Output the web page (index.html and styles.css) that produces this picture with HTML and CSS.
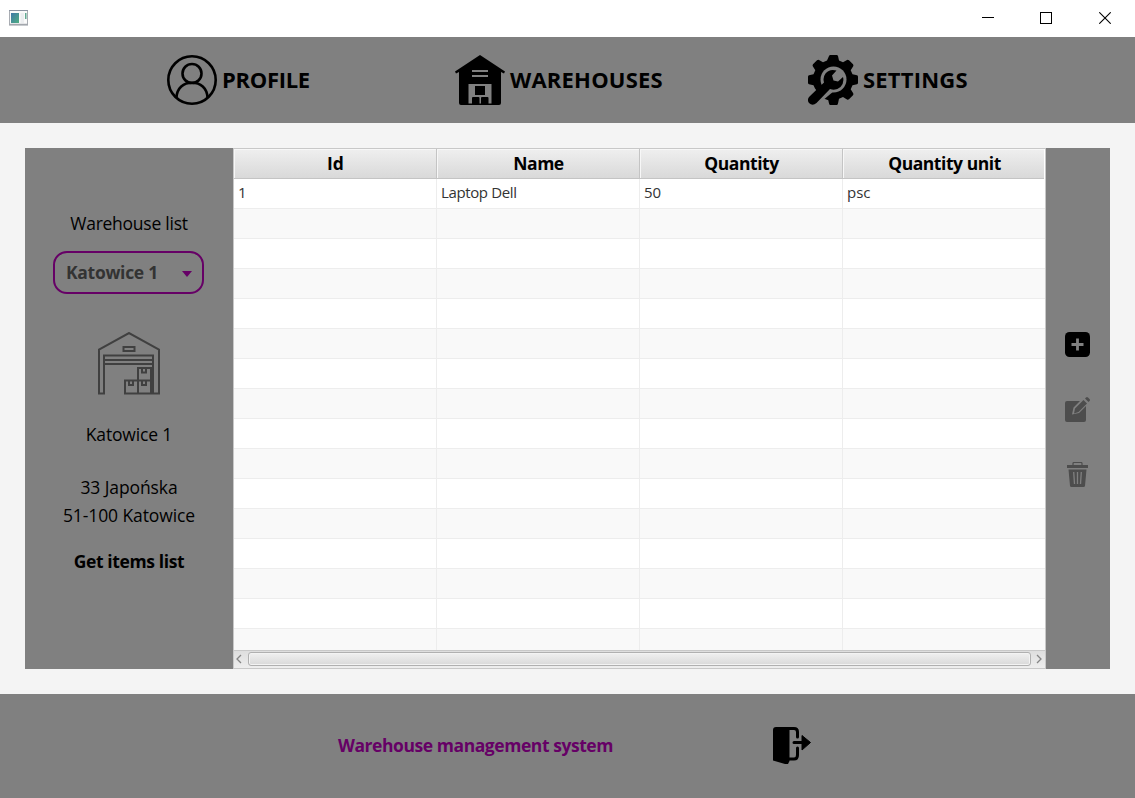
FILE: index.html
```html
<!DOCTYPE html>
<html lang="en">
<head>
<meta charset="utf-8">
<title>Warehouse management system</title>
<link rel="stylesheet" href="styles.css">
</head>
<body>
<header class="titlebar">
  <svg class="app-icon" width="19" height="16" viewBox="0 0 19 16">
    <defs><linearGradient id="pane" x1="0" y1="0" x2="1" y2="1"><stop offset="0" stop-color="#3f78a8"/><stop offset="1" stop-color="#4fae82"/></linearGradient></defs>
    <rect x=".5" y=".5" width="18" height="14.5" fill="#fafafa" stroke="#a9adb3"/>
    <path d="M0 .5h19" stroke="#8c95a3"/><path d="M0 14.5h19" stroke="#a3a7ad" stroke-width="1.5"/>
    <rect x="2" y="3" width="8" height="10" fill="url(#pane)"/>
    <rect x="11.500" y="3" width="3.500" height="10" fill="#eceef0"/>
    <rect x="16" y="3" width="1.500" height="6" fill="#62aa92"/>
  </svg>
  <div class="window-buttons">
    <svg width="12" height="12" viewBox="0 0 12 12"><path d="M0 5.500h12" stroke="#000"/></svg>
    <svg width="12" height="12" viewBox="0 0 12 12"><rect x=".5" y=".5" width="11" height="11" fill="none" stroke="#000"/></svg>
    <svg class="close" width="12" height="12" viewBox="0 0 12 12"><path d="M.3.3l11.400 11.400M11.700.3L.3 11.700" stroke="#000" stroke-width="1.100"/></svg>
  </div>
</header>

<nav class="nav">
  <a class="nav-item"><svg width="50" height="50" viewBox="0 0 50 50" fill="none" stroke="#000" stroke-width="2.600"><circle cx="25" cy="25" r="23.700"/><circle cx="25" cy="18.500" r="9.500"/><path d="M9.500 42.500C10 33 16.500 27.700 25 27.700S40 33 40.500 42.500"/></svg><span class="t-profile">PROFILE</span></a>
  <a class="nav-item"><svg width="50" height="50" viewBox="0 0 50 50"><path d="M25 0L50 16.500 49 18.500 46 17V48q0 2-2 2H6q-2 0-2-2V17L1 18.500 0 16.500Z"/><path fill="#808080" d="M17 15h16v2H17zM17 20h16v2H17zM13.500 29h23v19.500h-3V43q0-1-1-1H27q-1 0-1 1v5.500h-1.500V43q0-1-1-1H18q-1 0-1 1v5.500h-3.500z"/><rect x="20" y="31" width="10" height="9"/></svg><span class="t-warehouses">WAREHOUSES</span></a>
  <a class="nav-item"><svg width="50" height="50" viewBox="0 0 50 50"><path d="M21 1q.3-1 1.500-1h6q1.200 0 1.500 1l1 4.500 4 1.700L39 5q1-.5 2 .3l4 4q.8 1 .2 2l-2.500 4 1.800 4 4.500 1q1 .3 1 1.500v6q0 1.200-1 1.500l-4.500 1-1.800 4 2.500 4q.6 1-.2 2l-4 4q-1 .8-2 .2l-4-2.500-4 1.800-1 4.700q-.3 1.500-1.500 1.500h-6q-1.200 0-1.500-1.500l-.7-3.200-3.300-1.300L5 40 9 36 7 33.500 5.500 30.300 1 29.300q-1-.3-1-1.500v-6q0-1.200 1-1.500l4.500-1 1.800-4-2.500-4q-.6-1 .2-2l4-4q1-.8 2-.3l4 2.200 4-1.700z"/><circle cx="25.500" cy="24.500" r="13" fill="#808080"/><path d="M17 29L0 44l8 7 18-15" fill="#808080"/><path d="M28.500 15.500q-7-2-11 3-3 4-1.500 9L1.500 41.500q-3 3-.5 6.500 3.500 3.500 7.500 0L22 34q6 2 10.500-2 4-4 2.500-10l-5 4.500-4.500-1-1.500-5z"/></svg><span class="t-settings">SETTINGS</span></a>
</nav>

<main class="content">
  <aside class="sidebar">
    <div class="line t-list">Warehouse list</div>
    <div class="select"><span class="t-select">Katowice 1</span><svg width="10" height="6" viewBox="0 0 10 6"><path d="M0 0h10L5 6z" fill="#660066"/></svg></div>
    <svg class="depot" width="64" height="64" viewBox="0 0.500 64 64" fill="none" stroke="#404040" stroke-width="2"><path d="M2 62V18L32 1.500 62 18V62H56V24H7V62ZM7 28.500H56M7 32.500H56M26.500 15.500h11v4h-11zM41 49V36.500H54V62H28V49H54M41 49V62M45 37v4h4v-4M32 50v3.500h4V50M45 50v3.500h4V50"/></svg>
    <div class="line t-name">Katowice 1</div>
    <div class="line t-street">33 Japońska</div>
    <div class="line t-city">51-100 Katowice</div>
    <div class="line t-get">Get items list</div>
  </aside>

  <section class="table">
    <div class="row head"><div><span class="t-id">Id</span></div><div><span class="t-hname">Name</span></div><div><span class="t-qty">Quantity</span></div><div><span class="t-unit">Quantity unit</span></div></div>
    <div class="rows">
      <div class="row"><div>1</div><div><span class="t-laptop">Laptop Dell</span></div><div>50</div><div>psc</div></div>
      <div class="row"><div></div><div></div><div></div><div></div></div>
      <div class="row"><div></div><div></div><div></div><div></div></div>
      <div class="row"><div></div><div></div><div></div><div></div></div>
      <div class="row"><div></div><div></div><div></div><div></div></div>
      <div class="row"><div></div><div></div><div></div><div></div></div>
      <div class="row"><div></div><div></div><div></div><div></div></div>
      <div class="row"><div></div><div></div><div></div><div></div></div>
      <div class="row"><div></div><div></div><div></div><div></div></div>
      <div class="row"><div></div><div></div><div></div><div></div></div>
      <div class="row"><div></div><div></div><div></div><div></div></div>
      <div class="row"><div></div><div></div><div></div><div></div></div>
      <div class="row"><div></div><div></div><div></div><div></div></div>
      <div class="row"><div></div><div></div><div></div><div></div></div>
      <div class="row"><div></div><div></div><div></div><div></div></div>
      <div class="row"><div></div><div></div><div></div><div></div></div>
    </div>
    <div class="scrollbar"><svg width="6" height="10" viewBox="0 0 6 10"><path d="M5 1L1 5l4 4" fill="none" stroke="#858585" stroke-width="1.300"/></svg><div class="thumb"></div><svg width="6" height="10" viewBox="0 0 6 10"><path d="M1 1l4 4-4 4" fill="none" stroke="#858585" stroke-width="1.300"/></svg></div>
  </section>

  <aside class="actions">
    <svg width="26" height="26" viewBox="0 0 26 26"><rect x="0" y="0" width="25" height="25" rx="4.500"/><path d="M12.500 6.500v12M6.500 12.500h12" stroke="#808080" stroke-width="2.800"/></svg>
    <svg width="26" height="26" viewBox="0 0 26 26"><path fill="#4d4d4d" d="M2 4H15L8.500 10.500 7 17.500 14 16 21 9V23q0 2-2 2H2q-2 0-2-2V6q0-2 2-2z"/><path fill="#4d4d4d" d="M18.500 3L22 6.500 13.500 15 9 16.500 10 11.500zM20 1.500l1-1q1-1 2 0L24.500 2q1 1 0 2L23.500 5z"/></svg>
    <svg width="26" height="26" viewBox="0.500 0 26 26" fill="none" stroke="#4d4d4d"><path d="M2.500 4.500h21" stroke-width="3"/><path d="M8.500 4V1.500q0-1 1-1h7q1 0 1 1V4" stroke-width="1.200"/><path d="M4 7.500H22L20.500 24q-.2 1-1.500 1H7q-1.300 0-1.500-1z" fill="#4d4d4d" stroke="none"/><path d="M9.200 10l.8 12M13 10v12M16.800 10L16 22" stroke="#808080" stroke-width="1.300"/></svg>
  </aside>
</main>

<footer class="footer">
  <span class="t-system">Warehouse management system</span>
  <svg width="38" height="38" viewBox="0 0 38 38"><path d="M3 0H12L16.500 3V34L15 37H12L0 33.500V3Q0 0 3 0z"/><path d="M6 1.500H21Q24.500 1.500 24.500 5V10M24.500 21V28Q24.500 32 21 32H15M21 15.500H31" fill="none" stroke="#000" stroke-width="3" stroke-linecap="round"/><path d="M29 8.500L37.500 15.500 29 23Z" stroke="#000" stroke-linejoin="round"/></svg>
</footer>
</body>
</html>
```
FILE: styles.css
```css
* { box-sizing: border-box; }
body { margin: 0; width: 1135px; height: 798px; overflow: hidden; background: #f4f4f4; font-family: "Open Sans", "Noto Sans", sans-serif; font-size: 17.5px; color: #000; display: flex; flex-direction: column; }
svg { display: block; flex: none; }
span { white-space: nowrap; }
.titlebar { height: 37px; flex: none; background: #fff; display: flex; justify-content: space-between; padding: 10px 24px 0 9px; }
.window-buttons { display: flex; gap: 46px; padding-top: 2px; }
.close { margin-left: 1px; }
.nav { height: 86px; flex: none; background: #808080; display: grid; grid-template-columns: 288px 353px auto; padding-left: 167px; align-items: center; }
.nav-item { display: flex; align-items: center; gap: 5px; font-size: 22px; font-weight: 700; line-height: 30px; }
.nav-item span { padding-bottom: 2px; }
.t-profile { letter-spacing: -.3px; }
.t-warehouses, .t-settings { letter-spacing: .2px; }
.content { height: 571px; flex: none; padding: 25px; display: flex; }
.sidebar { width: 208px; background: #808080; display: flex; flex-direction: column; align-items: center; padding-top: 63px; }
.line { height: 24px; line-height: 24px; white-space: nowrap; }
.select { width: 151px; height: 43px; margin: 16px 0 38px; border: 2.5px solid #660066; border-radius: 14px; display: flex; align-items: center; justify-content: space-between; padding: 0 10px 0 11px; color: #333; font-weight: 700; align-self: flex-start; margin-left: 28px; }
.select span { padding-bottom: 2px; letter-spacing: -.3px; }
.select svg { margin-top: 2px; }
.depot { margin-bottom: 26px; }
.t-list { letter-spacing: -.25px; }
.t-name { margin-bottom: 29px; letter-spacing: -.15px; }
.t-street { margin-bottom: 4px; letter-spacing: -.1px; }
.t-city { letter-spacing: -.1px; }
.t-get { margin-top: 22px; font-weight: 700; letter-spacing: -.37px; }
.table { width: 813px; border: 1px solid #c8c8c8; background: #fff; display: flex; flex-direction: column; }
.row { display: grid; grid-template-columns: repeat(4, 203px); height: 30px; flex: none; }
.row > div { border-right: 1px solid #ededed; border-bottom: 1px solid #ededed; padding-left: 4px; font-size: 15px; line-height: 27px; color: #333; }
.rows .row:nth-child(even) { background: #f9f9f9; }
.rows { height: 471px; overflow: hidden; }
.t-laptop { letter-spacing: -.37px; }
.row.head { margin-right: 1px; overflow: hidden; }
.row.head > div { font-size: 17.5px; font-weight: 700; text-align: center; padding: 0 0 0 1px; color: #000; line-height: 28px; background: linear-gradient(#efefef, #d9d9d9); border-color: #c4c4c4; box-shadow: inset 1px 1px #f7f7f7; }
.t-hname, .t-qty, .t-unit { letter-spacing: -.45px; }
.scrollbar { height: 18px; background: linear-gradient(#dedede, #eeeeee); border-top: 1px solid #c8c8c8; display: flex; align-items: center; justify-content: space-between; padding: 0 3px 2px 2px; }
.thumb { width: 783px; height: 14px; border: 1px solid #b0b0b0; border-radius: 3px; background: linear-gradient(#f0f0f0, #d9d9d9); box-shadow: inset 0 0 0 1px #f3f3f3; }
.actions { width: 64px; background: #808080; display: flex; flex-direction: column; align-items: center; gap: 39px; padding-top: 184px; }
.footer { height: 104px; flex: none; background: #808080; display: flex; align-items: center; padding-left: 338px; color: #660066; font-weight: 700; }
.t-system { width: 275px; letter-spacing: -.44px; padding-bottom: 2px; }
.footer svg { margin-left: 160px; }
```
